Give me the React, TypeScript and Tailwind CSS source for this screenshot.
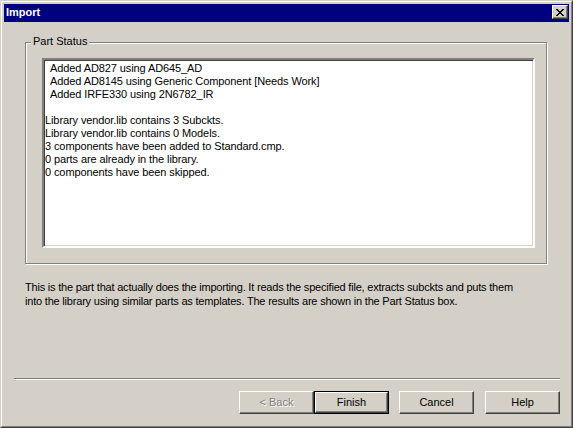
import React from "react";

const statusLines = [
  { text: "Added AD827 using AD645_AD", indent: true },
  { text: "Added AD8145 using Generic Component [Needs Work]", indent: true },
  { text: "Added IRFE330 using 2N6782_IR", indent: true },
  { text: "", indent: false },
  { text: "Library vendor.lib contains 3 Subckts.", indent: false },
  { text: "Library vendor.lib contains 0 Models.", indent: false },
  { text: "3 components have been added to Standard.cmp.", indent: false },
  { text: "0 parts are already in the library.", indent: false },
  { text: "0 components have been skipped.", indent: false },
];

const CloseGlyph = () => (
  <svg width="8" height="7" viewBox="0 0 8 7" shapeRendering="crispEdges">
    <rect x="0" y="0" width="2" height="1" fill="#000" />
    <rect x="6" y="0" width="2" height="1" fill="#000" />
    <rect x="1" y="1" width="2" height="1" fill="#000" />
    <rect x="5" y="1" width="2" height="1" fill="#000" />
    <rect x="2" y="2" width="4" height="1" fill="#000" />
    <rect x="3" y="3" width="2" height="1" fill="#000" />
    <rect x="2" y="4" width="4" height="1" fill="#000" />
    <rect x="1" y="5" width="2" height="1" fill="#000" />
    <rect x="5" y="5" width="2" height="1" fill="#000" />
    <rect x="0" y="6" width="2" height="1" fill="#000" />
    <rect x="6" y="6" width="2" height="1" fill="#000" />
  </svg>
);

function Button({
  label,
  disabled = false,
  isDefault = false,
  className = "",
}: {
  label: string;
  disabled?: boolean;
  isDefault?: boolean;
  className?: string;
}) {
  return (
    <div
      className={
        "h-[23px] w-[75px] bg-[#d4d0c8] " +
        (isDefault ? "border border-black " : "") +
        className
      }
    >
      <div className="flex h-full w-full items-center justify-center border border-t-white border-l-white border-b-[#404040] border-r-[#404040] shadow-[inset_-1px_-1px_0_#808080]">
        <span
          className={
            disabled
              ? "text-[#808080] [text-shadow:1px_1px_0_#fff]"
              : "text-black"
          }
        >
          {label}
        </span>
      </div>
    </div>
  );
}

export default function App() {
  return (
    <div className="h-[428px] w-[573px] font-['Liberation_Sans',Arial,sans-serif] text-[11px] leading-[13px] text-black">
      <div className="h-full w-full border border-t-[#d4d0c8] border-l-[#d4d0c8] border-b-[#404040] border-r-[#404040] bg-[#d4d0c8]">
        <div className="flex h-full w-full flex-col border border-t-white border-l-white border-b-[#808080] border-r-[#808080] p-[2px]">
          {/* title bar */}
          <div className="flex h-[18px] items-start justify-between bg-[#000080] pl-[2px] pr-[1px]">
            <span className="mt-[2px] font-bold text-white">Import</span>
            <div className="mt-[1px] h-[14px] w-[16px] bg-[#d4d0c8]">
              <div className="flex h-full w-full items-center justify-center border border-t-white border-l-white border-b-[#404040] border-r-[#404040] shadow-[inset_-1px_-1px_0_#808080]">
                <CloseGlyph />
              </div>
            </div>
          </div>

          {/* body */}
          <div className="flex flex-1 flex-col">
            <div className="relative ml-[21px] mr-[22px] mt-[20px] h-[222px] border border-[#808080] shadow-[inset_1px_1px_0_#fff,1px_1px_0_#fff]">
              <span className="absolute -top-[8px] left-[5px] bg-[#d4d0c8] px-[2px]">
                Part Status
              </span>
              <div className="ml-[16px] mt-[15px] h-[190px] w-[493px] border-2 border-t-[#808080] border-l-[#808080] border-b-white border-r-white bg-white shadow-[inset_1px_1px_0_#404040,inset_-1px_-1px_0_#d4d0c8]">
                <div className="pl-[1px] pt-[2px] tracking-[-0.1px]">
                  {statusLines.map((line, i) => (
                    <div
                      key={i}
                      className={
                        "h-[13px] whitespace-pre " +
                        (line.indent ? "pl-[5px]" : "")
                      }
                    >
                      {line.text}
                    </div>
                  ))}
                </div>
              </div>
            </div>

            <p className="ml-[21px] mr-[50px] mt-[16px] leading-[14px] tracking-[-0.2px]">
              This is the part that actually does the importing. It reads the
              specified file, extracts subckts and puts them into the library
              using similar parts as templates. The results are shown in the
              Part Status box.
            </p>

            <div className="ml-[10px] mr-[9px] mt-auto h-[2px] border-t border-b border-t-[#808080] border-b-white" />

            <div className="mb-[10px] mr-[9px] mt-[11px] flex justify-end">
              <Button label="< Back" disabled />
              <Button label="Finish" isDefault />
              <Button label="Cancel" className="ml-[10px]" />
              <Button label="Help" className="ml-[11px]" />
            </div>
          </div>
        </div>
      </div>
    </div>
  );
}
